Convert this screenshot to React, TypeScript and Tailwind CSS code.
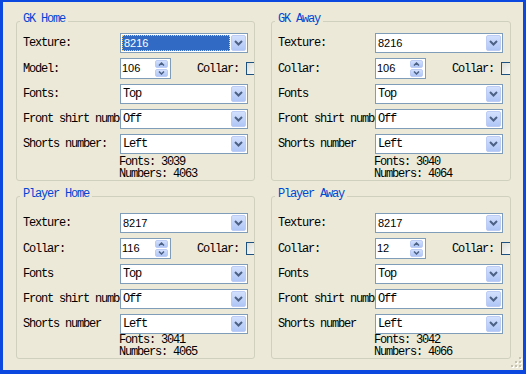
const mono = { fontFamily: '"Liberation Mono", "DejaVu Sans Mono", monospace' };

function Chevron() {
  return (
    <svg width="9" height="6" viewBox="0 0 9 6">
      <path d="M1 1 L4.5 4.5 L8 1" fill="none" stroke="#4D6185" strokeWidth="2" />
    </svg>
  );
}

function Combo({ value, sans = false, selected = false }: { value: string; sans?: boolean; selected?: boolean }) {
  return (
    <div className="flex h-[20px] w-[128px] shrink-0 items-center border border-[#7F9DB9] bg-white">
      {selected ? (
        <div className="ml-[1px] flex h-[16px] w-[108px] items-center border border-dotted border-[#F5D27A] bg-[#316AC5] pl-[1px] text-[11px] text-white [font-family:'Liberation_Sans',Arial,sans-serif]">
          {value}
        </div>
      ) : (
        <div
          className={`pl-[2px] ${sans ? "text-[11px] [font-family:'Liberation_Sans',Arial,sans-serif]" : 'tracking-[-1.2px] text-[12px]'}`}
        >
          {value}
        </div>
      )}
      <div className="ml-auto mr-[1px] flex h-[16px] w-[15px] items-center justify-center rounded-[2px] border border-[#BCCCF5] bg-gradient-to-b from-[#D3E0FD] to-[#AFC6F6]">
        <Chevron />
      </div>
    </div>
  );
}

function Spinner({ value }: { value: string }) {
  return (
    <div className="flex h-[21px] w-[51px] shrink-0 items-center border border-[#7F9DB9] bg-white">
      <div className="pl-[1px] text-[11px] [font-family:'Liberation_Sans',Arial,sans-serif]">{value}</div>
      <div className="ml-auto mr-[2px] flex h-[17px] w-[13px] flex-col gap-[1px]">
        <div className="flex flex-1 items-center justify-center rounded-[2px] border border-[#BCCCF5] bg-gradient-to-b from-[#D3E0FD] to-[#AFC6F6]">
          <svg width="7" height="4" viewBox="0 0 7 4">
            <path d="M1 3.5 L3.5 1 L6 3.5" fill="none" stroke="#4D6185" strokeWidth="1.5" />
          </svg>
        </div>
        <div className="flex flex-1 items-center justify-center rounded-[2px] border border-[#BCCCF5] bg-gradient-to-b from-[#D3E0FD] to-[#AFC6F6]">
          <svg width="7" height="4" viewBox="0 0 7 4">
            <path d="M1 0.5 L3.5 3 L6 0.5" fill="none" stroke="#4D6185" strokeWidth="1.5" />
          </svg>
        </div>
      </div>
    </div>
  );
}

function Label({ text }: { text: string }) {
  return (
    <div className="w-[97px] shrink-0 overflow-hidden whitespace-nowrap text-[12px] leading-[14px] tracking-[-1.2px]">
      {text}
    </div>
  );
}

type GroupProps = {
  title: string;
  labels: string[];
  texture: string;
  selected?: boolean;
  spin: string;
  fonts: string;
  numbers: string;
  padTop: string;
  textTop: string;
};

function Group({ title, labels, texture, selected, spin, fonts, numbers, padTop, textTop }: GroupProps) {
  return (
    <fieldset className="min-w-0 overflow-hidden rounded-[3px] border border-[#D0D0BF] px-[6px]">
      <legend className="ml-[-3px] px-[3px] pb-[4px] text-[12px] leading-[12px] tracking-[-1.2px] text-[#0046D5]">
        {title}
      </legend>
      <div className={`flex flex-col gap-[5px] ${padTop}`}>
        <div className="flex items-center">
          <Label text={labels[0]} />
          <Combo value={texture} sans selected={selected} />
        </div>
        <div className="flex items-center">
          <Label text={labels[1]} />
          <Spinner value={spin} />
          <div className="ml-[26px] shrink-0 text-[12px] tracking-[-1.2px]">Collar:</div>
          <div className="ml-[7px] h-[13px] w-[13px] shrink-0 border border-[#1C5180] bg-gradient-to-br from-[#DCDCD7] to-white" />
        </div>
        <div className="flex items-center">
          <Label text={labels[2]} />
          <Combo value="Top" />
        </div>
        <div className="flex items-center">
          <Label text={labels[3]} />
          <Combo value="Off" />
        </div>
        <div className="flex items-center">
          <Label text={labels[4]} />
          <Combo value="Left" />
        </div>
      </div>
      <div className={`ml-[96px] text-[12px] leading-[12px] tracking-[-1.2px] ${textTop}`}>
        <div>Fonts: {fonts}</div>
        <div>Numbers: {numbers}</div>
      </div>
    </fieldset>
  );
}

export default function App() {
  return (
    <div className="flex h-[374px] w-[529px] bg-white text-black" style={mono}>
      <div className="relative h-[374px] w-[526px] border-b-4 border-l-[3px] border-r-[3px] border-t-2 border-[#0A48DF] bg-[#ECE9D8]">
        <div className="grid grid-cols-[239px_240px] grid-rows-[168px_171px] gap-x-[16px] gap-y-[7px] pl-[13px] pt-[11px]">
          <Group
            title="GK Home"
            labels={['Texture:', 'Model:', 'Fonts:', 'Front shirt number:', 'Shorts number:']}
            texture="8216"
            selected
            spin="106"
            fonts="3039"
            numbers="4063"
            padTop="pt-[4px]"
            textTop="mt-[2px]"
          />
          <Group
            title="GK Away"
            labels={['Texture:', 'Collar:', 'Fonts', 'Front shirt number', 'Shorts number']}
            texture="8216"
            spin="106"
            fonts="3040"
            numbers="4064"
            padTop="pt-[4px]"
            textTop="mt-[2px]"
          />
          <Group
            title="Player Home"
            labels={['Texture:', 'Collar:', 'Fonts', 'Front shirt number', 'Shorts number']}
            texture="8217"
            spin="116"
            fonts="3041"
            numbers="4065"
            padTop="pt-[9px]"
            textTop="mt-0"
          />
          <Group
            title="Player Away"
            labels={['Texture:', 'Collar:', 'Fonts', 'Front shirt number', 'Shorts number']}
            texture="8217"
            spin="12"
            fonts="3042"
            numbers="4066"
            padTop="pt-[9px]"
            textTop="mt-0"
          />
        </div>
        <svg className="absolute bottom-[2px] right-[1px]" width="11" height="11" viewBox="0 0 11 11">
          {[
            [8, 0],
            [8, 4],
            [4, 4],
            [8, 8],
            [4, 8],
            [0, 8],
          ].map(([x, y], i) => (
            <g key={i}>
              <rect x={x + 1} y={y + 1} width="2" height="2" fill="#FFFFFF" />
              <rect x={x} y={y} width="2" height="2" fill="#C5C2B2" />
            </g>
          ))}
        </svg>
      </div>
    </div>
  );
}
